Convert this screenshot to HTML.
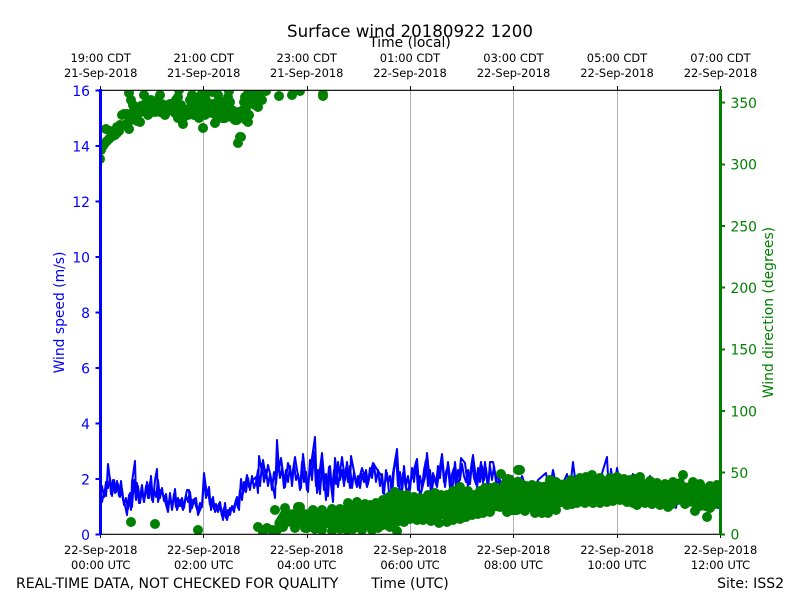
<!DOCTYPE html>
<html><head><meta charset="utf-8"><style>
html,body{margin:0;padding:0;background:#fff}
svg{display:block}
text{font-family:"DejaVu Sans",sans-serif}
</style></head><body>
<svg width="800" height="600" viewBox="0 0 800 600" xmlns="http://www.w3.org/2000/svg">
<defs><clipPath id="c"><rect x="100" y="90" width="620" height="444"/></clipPath></defs>
<rect width="800" height="600" fill="#fff"/>
<path d="M203.5 90V534M307.5 90V534M410.5 90V534M513.5 90V534M617.5 90V534" stroke="#b0b0b0" stroke-width="1" fill="none"/>
<g clip-path="url(#c)">
<path fill="none" stroke="#0000ff" stroke-width="2" stroke-linejoin="round" d="M100 493L102 502L104 492L106 496L107 482L108 464L110 480L111 494L113 480L115 493L117 481L119 496L121 481L123 500L125 505L127 515L129 495L131 510L132 482L135 461L136 497L137 483L139 503L142 485L144 502L147 482L149 498L151 476L153 502L155 480L157 469L158 502L161 490L164 497L168 512L170 493L172 510L175 489L177 510L180 500L183 510L187 490L189 490L190 512L193 500L196 498L198 515L202 505L204 473L207 495L209 487L211 510L213 497L215 512L220 502L223 520L225 503L227 520L230 508L233 510L237 497L239 510L241 479L243 493L245 487L247 475L249 487L253 480L256 477L258 493L259 456L262 472L263 460L266 478L268 465L272 482L275 498L277 440L279 470L281 458L285 487L288 463L292 477L295 457L297 470L301 488L303 454L307 490L311 465L315 437L317 493L322 453L326 500L329 467L333 502L335 458L338 487L342 457L345 480L347 462L350 488L351 456L357 487L362 468L365 477L367 487L373 463L382 477L383 493L387 473L390 502L393 473L397 449L400 502L403 473L407 493L413 473L417 459L420 497L425 477L427 453L431 493L433 473L437 487L442 454L445 487L448 462L452 493L455 462L458 493L461 458L465 463L468 487L473 455L477 487L481 462L483 483L485 462L488 490L490 462L493 462L497 483L500 480L504 500L510 478L516 495L522 476L530 498L538 480L546 473L549 492L553 470L558 495L567 474L570 490L573 462L577 495L585 480L590 496L600 480L607 457L609 495L611 469L614 490L617 468L622 495L633 474L638 492L642 498L650 476L660 495L670 485L676 508L680 485L683 480L687 507L695 490L705 495L712 490L718 508L720 495"/>
<path fill="none" stroke="#0000ff" stroke-width="2" stroke-linejoin="round" d="M100 498L102 486L104 497L106 482L108 488L110 478L112 496L114 480L116 492L118 484L120 497L122 489L124 505L126 498L128 509L130 493L132 507L134 480L136 500L138 486L140 503L142 490L144 502L146 486L148 498L150 482L152 500L154 490L156 497L158 480L160 498L162 488L164 501L166 494L168 510L170 496L172 508L174 494L176 507L178 498L180 506L182 498L184 508L186 495L188 502L190 492L192 508L194 500L196 506L198 512L200 503L202 507L204 480L206 498L208 490L210 505L212 499L214 509L216 504L218 512L220 506L222 516L224 508L226 518L228 510L230 515L232 506L234 512L236 500L238 508L240 490L242 500L244 482L246 492L248 478L250 490L252 476L254 488L256 482L258 470L260 486L262 464L264 482L266 470L268 486L270 474L272 490L274 472L276 484L278 462L280 478L282 468L284 488L286 470L288 482L290 466L292 486L294 464L296 480L298 474L300 490L302 462L304 482L306 472L308 492L310 460L312 480L314 452L316 486L318 470L320 494L322 464L324 490L326 474L328 496L330 466L332 490L334 470L336 484L338 462L340 480L342 470L344 486L346 468L348 482L350 466L352 488L354 472L356 484L358 476L360 488L362 474L364 482L366 470L368 484L370 468L372 478L374 464L376 482L378 470L380 486L382 474L384 494L386 470L388 482L390 476L392 496L394 470L396 456L398 486L400 472L402 494L404 466L406 486L408 476L410 490L412 468L414 482L416 462L418 490L420 476L422 488L424 470L426 460L428 486L430 470L432 490L434 476L436 484L438 466L440 478L442 458L444 482L446 472L448 466L450 488L452 474L454 468L456 488L458 470L460 480L462 464L464 476L466 482L468 470L470 484L472 462L474 478L476 484L478 468L480 482L482 466L484 480L486 468L488 486L490 466L492 480L494 466L496 482L498 474L500 486L504 478L508 490L512 476L516 488"/>
<path fill="#008000" stroke="#008000" stroke-width="3" stroke-linejoin="round" d="M276 522L282 512L300 510L313 512L332 511L348 505L370 507L383 502L395 494L420 499L435 495L447 497L460 489L475 496L495 489L518 478L532 487L550 482L580 480L592 477L617 479L640 479L657 485L690 484L720 487L720 499L707 510L678 501L660 503L637 503L600 501L577 501L567 503L548 511L535 511L513 508L483 511L460 517L423 518L397 525L372 528L340 527L305 526L290 525L276 526Z"/>
<path fill="none" stroke="#008000" stroke-width="10" stroke-linecap="round" d="M100 159h0M101 150h0M103 146h0M105 143h0M107 141h0M106 129h0M109 139h0M111 137h0M113 136h0M115 135h0M117 133h0M119 131h0M120 125h0M117 127h0M122 115h0M124 114h0M128 123h0M129 129h0M127 114h0M130 116h0M133 113h0M133 105h0M131 100h0M129 93h0M134 110h0M137 121h0M140 122h0M141 106h0M144 95h0M146 103h0M149 109h0M151 100h0M153 107h0M155 112h0M158 100h0M160 95h0M162 104h0M165 115h0M168 105h0M170 110h0M173 107h0M176 100h0M178 97h0M179 90h0M181 105h0M183 124h0M183 118h0M186 110h0M188 115h0M190 100h0M192 95h0M194 115h0M197 108h0M199 118h0M201 95h0M203 128h0M204 107h0M206 100h0M208 90h0M210 110h0M212 92h0M214 90h0M216 115h0M218 95h0M215 123h0M222 118h0M225 105h0M228 97h0M230 102h0M229 91h0M233 118h0M235 120h0M237 120h0M240 137h0M241 137h0M238 143h0M243 110h0M246 120h0M248 122h0M246 108h0M248 100h0M250 97h0M249 115h0M252 92h0M255 105h0M257 95h0M258 107h0M260 92h0M262 100h0M264 90h0M266 91h0M245 97h0M247 95h0M279 96h0M292 95h0M300 91h0M323 94h0M323 96h0M150 113h0M143 111h0M148 115h0M160 112h0M175 113h0M178 118h0M190 108h0M205 115h0M212 113h0M218 108h0M225 118h0M228 113h0M139 113h0M145 108h0M157 108h0M163 110h0M170 104h0M178 108h0M184 112h0M192 110h0M198 104h0M202 112h0M208 108h0M213 104h0M220 112h0M224 110h0M232 110h0M238 112h0M241 116h0M244 102h0M252 100h0M196 98h0M205 94h0M219 100h0M124 125h0M110 131h0M131 522h0M155 524h0M198 530h0M258 527h0M267 528h0M275 510h0M285 508h0M298 507h0M287 518h0M283 527h0M295 528h0M307 528h0M303 517h0M263 532h0M272 530h0M277 530h0M300 507h0M313 510h0M332 509h0M348 503h0M357 502h0M370 505h0M383 500h0M395 492h0M407 495h0M420 498h0M435 493h0M447 495h0M460 487h0M475 495h0M485 488h0M495 487h0M501 474h0M508 479h0M518 470h0M513 490h0M305 528h0M322 530h0M340 529h0M353 529h0M372 530h0M383 525h0M397 531h0M410 519h0M423 520h0M439 523h0M447 522h0M460 519h0M472 515h0M483 513h0M507 512h0M500 507h0M517 510h0M520 470h0M532 485h0M550 480h0M562 485h0M580 478h0M592 475h0M617 477h0M630 480h0M640 477h0M657 483h0M673 482h0M683 475h0M693 482h0M717 485h0M543 487h0M510 480h0M513 510h0M535 513h0M548 513h0M567 505h0M577 503h0M600 503h0M607 502h0M620 500h0M627 502h0M637 505h0M645 503h0M660 505h0M668 507h0M678 500h0M695 511h0M707 517h0M710 508h0M717 498h0M322 510h0M340 509h0M365 504h0M376 503h0M389 497h0M401 495h0M414 497h0M428 495h0M441 495h0M453 491h0M468 491h0M480 491h0M490 488h0M505 484h0M526 486h0M538 486h0M556 482h0M571 480h0M586 477h0M600 478h0M610 478h0M624 479h0M635 479h0M650 481h0M665 484h0M680 483h0M700 484h0M710 486h0M315 529h0M332 531h0M347 530h0M362 530h0M378 528h0M390 527h0M404 522h0M417 520h0M431 521h0M453 520h0M466 517h0M478 514h0M490 512h0M525 511h0M542 513h0M556 510h0M572 504h0M585 503h0M593 503h0M613 501h0M633 503h0M652 504h0M688 502h0M700 506h0M672 504h0M685 504h0M715 504h0"/>
</g>
<path d="M100 90.300H720M100 534.300H720" stroke="#000" stroke-width="1.1" fill="none"/>
<path d="M100.500 86V90M203.500 86V90M307.500 86V90M410.500 86V90M513.500 86V90M617.500 86V90M720.500 86V90M100.500 534V538M203.500 534V538M307.500 534V538M410.500 534V538M513.500 534V538M617.500 534V538M720.500 534V538" stroke="#000" stroke-width="1" fill="none"/>
<path d="M100.500 89V535" stroke="#0000ff" stroke-width="3"/>
<path d="M720.500 89V535" stroke="#008000" stroke-width="3"/>
<path d="M95.500 90.500H100M95.500 146H100M95.500 201.500H100M95.500 257H100M95.500 312.500H100M95.500 368H100M95.500 423.500H100M95.500 479H100M95.500 534.500H100" stroke="#0000ff" stroke-width="2"/>
<path d="M720 102.500H725M720 164.500H725M720 226H725M720 287.500H725M720 349.500H725M720 411H725M720 472.500H725M720 534.500H725" stroke="#008000" stroke-width="2"/>

<text x="410" y="37" font-size="16.67" text-anchor="middle" fill="#000">Surface wind 20180922 1200</text>
<text x="410" y="47" font-size="13.89" text-anchor="middle" fill="#000">Time (local)</text>

<g font-size="11.45" text-anchor="middle" fill="#000">
<text x="100.700" y="62">19:00 CDT</text><text x="100.700" y="77">21-Sep-2018</text>
<text x="203.700" y="62">21:00 CDT</text><text x="203.700" y="77">21-Sep-2018</text>
<text x="306.700" y="62">23:00 CDT</text><text x="306.700" y="77">21-Sep-2018</text>
<text x="410" y="62">01:00 CDT</text><text x="410" y="77">22-Sep-2018</text>
<text x="513.500" y="62">03:00 CDT</text><text x="513.500" y="77">22-Sep-2018</text>
<text x="617" y="62">05:00 CDT</text><text x="617" y="77">22-Sep-2018</text>
<text x="720.500" y="62">07:00 CDT</text><text x="720.500" y="77">22-Sep-2018</text>
<text x="100.700" y="554">22-Sep-2018</text><text x="100.700" y="569">00:00 UTC</text>
<text x="203.700" y="554">22-Sep-2018</text><text x="203.700" y="569">02:00 UTC</text>
<text x="306.700" y="554">22-Sep-2018</text><text x="306.700" y="569">04:00 UTC</text>
<text x="410" y="554">22-Sep-2018</text><text x="410" y="569">06:00 UTC</text>
<text x="513.500" y="554">22-Sep-2018</text><text x="513.500" y="569">08:00 UTC</text>
<text x="617" y="554">22-Sep-2018</text><text x="617" y="569">10:00 UTC</text>
<text x="720.500" y="554">22-Sep-2018</text><text x="720.500" y="569">12:00 UTC</text>
</g>

<g font-size="13.89" text-anchor="end" fill="#0000ff">
<text x="90" y="96">16</text><text x="90" y="151.500">14</text><text x="90" y="207">12</text><text x="90" y="262.500">10</text><text x="90" y="318">8</text><text x="90" y="373.500">6</text><text x="90" y="429">4</text><text x="90" y="484.500">2</text><text x="90" y="540">0</text>
</g>
<g font-size="13.89" fill="#008000">
<text x="730.500" y="108">350</text><text x="730.500" y="169.700">300</text><text x="730.500" y="231.400">250</text><text x="730.500" y="293">200</text><text x="730.500" y="354.700">150</text><text x="730.500" y="416.400">100</text><text x="730.500" y="478">50</text><text x="730.500" y="539.700">0</text>
</g>
<text transform="translate(64 312.500) rotate(-90)" font-size="13.89" text-anchor="middle" fill="#0000ff">Wind speed (m/s)</text>
<text transform="translate(773 312.500) rotate(-90)" font-size="13.89" text-anchor="middle" fill="#008000">Wind direction (degrees)</text>

<g font-size="14" fill="#000">
<text x="16" y="588">REAL-TIME DATA, NOT CHECKED FOR QUALITY</text>
<text x="410" y="588" text-anchor="middle">Time (UTC)</text>
<text x="784" y="588" text-anchor="end">Site: ISS2</text>
</g>
</svg>
</body></html>
